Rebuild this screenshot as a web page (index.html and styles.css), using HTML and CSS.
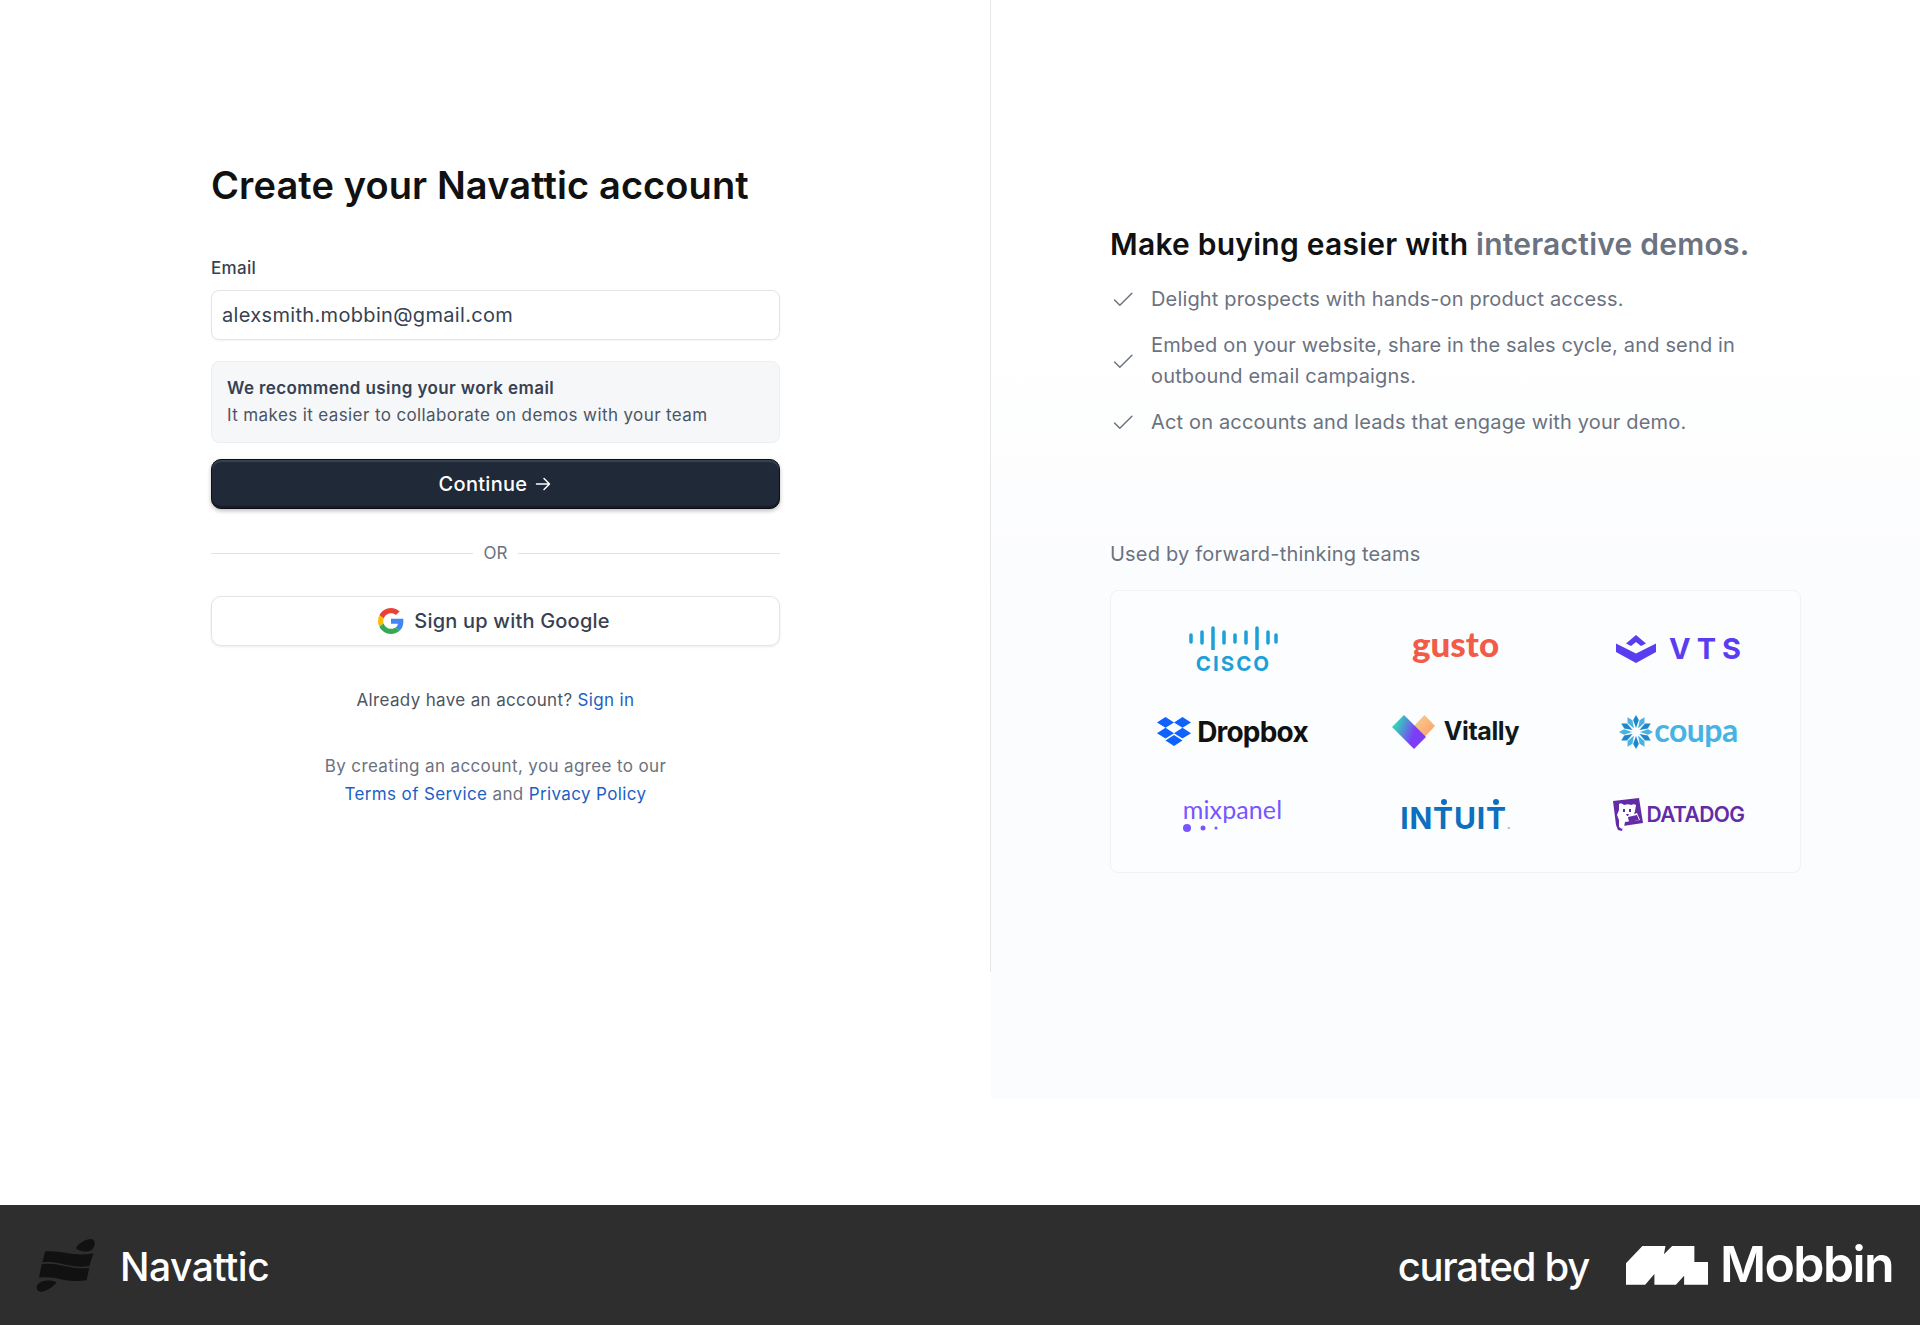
FILE: index.html
```html
<!DOCTYPE html>
<html lang="en">
<head>
<meta charset="utf-8">
<title>Create your Navattic account</title>
<link rel="stylesheet" href="styles.css">
</head>
<body>
<main class="split">
  <section class="left">
    <div class="form">
      <h1 class="title">Create your Navattic account</h1>
      <label class="label">Email</label>
      <div class="input">alexsmith.mobbin@gmail.com</div>
      <div class="notice">
        <strong class="notice-title">We recommend using your work email</strong>
        <span class="notice-text">It makes it easier to collaborate on demos with your team</span>
      </div>
      <button class="btn-primary">Continue
        <svg class="arrow" viewBox="0 0 18 18" width="18" height="18" fill="none" stroke="#fff" stroke-width="1.5" stroke-linecap="round" stroke-linejoin="round"><path d="M2.500 9h13M10 3.500 15.500 9 10 14.500"/></svg>
      </button>
      <div class="or"><span class="or-line"></span><span class="or-text">OR</span><span class="or-line"></span></div>
      <button class="btn-google">
        <svg viewBox="0 0 48 48" width="26" height="26"><path fill="#EA4335" d="M24 9.500c3.500 0 6.600 1.200 9.100 3.600l6.800-6.800C35.800 2.500 30.400 0 24 0 14.600 0 6.500 5.400 2.600 13.200l7.900 6.200C12.400 13.700 17.700 9.500 24 9.500z"/><path fill="#4285F4" d="M46.900 24.500c0-1.600-.1-3.100-.4-4.500H24v9h12.900c-.6 3-2.200 5.500-4.700 7.200l7.700 6c4.500-4.200 7-10.300 7-17.700z"/><path fill="#FBBC05" d="M10.500 28.600c-.5-1.400-.8-3-.8-4.600s.3-3.200.8-4.600l-7.900-6.200C.9 16.500 0 20.100 0 24s.9 7.500 2.600 10.800l7.900-6.200z"/><path fill="#34A853" d="M24 48c6.500 0 11.900-2.100 15.900-5.800l-7.700-6c-2.200 1.400-4.900 2.300-8.200 2.300-6.300 0-11.600-4.200-13.500-9.900l-7.900 6.200C6.500 42.600 14.600 48 24 48z"/></svg>
        <span>Sign up with Google</span>
      </button>
      <p class="signin">Already have an account? <a class="link" href="#">Sign in</a></p>
      <p class="terms">By creating an account, you agree to our<br><a class="link" href="#">Terms of Service</a> and <a class="link" href="#">Privacy Policy</a></p>
    </div>
  </section>
  <section class="right">
    <h2 class="pitch">Make buying easier with <span class="pitch-muted">interactive demos.</span></h2>
    <ul class="checks">
      <li class="check"><svg class="tick" viewBox="0 0 20 20" width="21" height="21" fill="none" stroke="#6b7280" stroke-width="1.4" stroke-linecap="round" stroke-linejoin="round"><path d="M1.500 10.500 6.500 15.500 18 4"/></svg><span>Delight prospects with hands-on product access.</span></li>
      <li class="check"><svg class="tick" viewBox="0 0 20 20" width="21" height="21" fill="none" stroke="#6b7280" stroke-width="1.4" stroke-linecap="round" stroke-linejoin="round"><path d="M1.500 10.500 6.500 15.500 18 4"/></svg><span>Embed on your website, share in the sales cycle, and send in outbound email campaigns.</span></li>
      <li class="check"><svg class="tick" viewBox="0 0 20 20" width="21" height="21" fill="none" stroke="#6b7280" stroke-width="1.4" stroke-linecap="round" stroke-linejoin="round"><path d="M1.500 10.500 6.500 15.500 18 4"/></svg><span>Act on accounts and leads that engage with your demo.</span></li>
    </ul>
    <p class="used">Used by forward-thinking teams</p>
    <div class="logos">
      <div class="logo logo-cisco">
        <svg viewBox="0 0 90 24" width="90" height="24" fill="none" stroke="#1ba0d7" stroke-width="3.500" stroke-linecap="round"><path d="M3 9v7M14 6v11M25 2v21M36 6v11M47 9v7M58 6v11M69 2v21M80 6v11M88 9v7"/></svg>
        <span class="cisco-text">CISCO</span>
      </div>
      <div class="logo"><span class="gusto">gusto</span></div>
      <div class="logo logo-vts">
        <svg viewBox="0 0 40 28" width="40" height="28" fill="#5a3df0"><path d="M0 8.500 20 18.500 40 8.500V17L20 28 0 17zM20 0 30 8.500 25 11 20 7 15 11 10 8.500z"/></svg>
        <span class="vts">VTS</span>
      </div>
      <div class="logo logo-dropbox">
        <svg viewBox="0 0 34 30" width="34" height="30" fill="#0f62fe"><path d="M8.500 0 17 5.400 8.500 10.800 0 5.400zM25.500 0 34 5.400l-8.500 5.400L17 5.400zM0 16.200l8.500-5.400 8.500 5.400-8.500 5.400zM25.500 10.800l8.500 5.400-8.500 5.400-8.500-5.400zM8.500 23.400 17 18l8.500 5.400L17 29z"/></svg>
        <span class="dropbox">Dropbox</span>
      </div>
      <div class="logo logo-vitally">
        <svg viewBox="0 0 44 34" width="44" height="34"><defs><linearGradient id="vg" x1="0" y1="0" x2="1" y2=".4"><stop offset=".2" stop-color="#33d1bb"/><stop offset=".75" stop-color="#7d3df5"/></linearGradient><linearGradient id="vo" x1="0" y1="0" x2="1" y2="1"><stop offset="0" stop-color="#f9cf9a"/><stop offset="1" stop-color="#fb9e5e"/></linearGradient></defs><path fill="url(#vo)" d="M22 11 32.500 0 43 11 32.500 22z"/><path fill="url(#vg)" d="M0 12 12 0 34 22 22 34z"/></svg>
        <span class="vitally">Vitally</span>
      </div>
      <div class="logo logo-coupa">
        <svg viewBox="0 0 34 34" width="34" height="34"><g fill="#1f86c9"><path d="M17 0l2.800 5-2.800 8-2.800-8z"/><path d="M17 0l2.800 5-2.800 8-2.800-8z" transform="rotate(60 17 17)"/><path d="M17 0l2.800 5-2.800 8-2.800-8z" transform="rotate(120 17 17)"/><path d="M17 0l2.800 5-2.800 8-2.800-8z" transform="rotate(180 17 17)"/><path d="M17 0l2.800 5-2.800 8-2.800-8z" transform="rotate(240 17 17)"/><path d="M17 0l2.800 5-2.800 8-2.800-8z" transform="rotate(300 17 17)"/></g><g fill="#47b3e4"><path d="M17 0l2.800 5-2.800 8-2.800-8z" transform="rotate(30 17 17)"/><path d="M17 0l2.800 5-2.800 8-2.800-8z" transform="rotate(90 17 17)"/><path d="M17 0l2.800 5-2.800 8-2.800-8z" transform="rotate(150 17 17)"/><path d="M17 0l2.800 5-2.800 8-2.800-8z" transform="rotate(210 17 17)"/><path d="M17 0l2.800 5-2.800 8-2.800-8z" transform="rotate(270 17 17)"/><path d="M17 0l2.800 5-2.800 8-2.800-8z" transform="rotate(330 17 17)"/></g></svg>
        <span class="coupa">coupa</span>
      </div>
      <div class="logo logo-mix">
        <span class="mixpanel">mixpanel</span>
        <svg class="mix-dots" viewBox="0 0 36 10" width="36" height="10" fill="#7856ff"><circle cx="4" cy="5" r="4"/><circle cx="20" cy="5" r="2.500"/><circle cx="33" cy="5" r="1.500"/></svg>
      </div>
      <div class="logo"><span class="intuit">IN<span class="dotted">T</span>UI<span class="dotted">T</span><span class="intuit-mark">.</span></span></div>
      <div class="logo logo-datadog">
        <svg viewBox="0 0 30 34" width="30" height="34"><path fill="#632ca6" d="M0 3 26 0l4 25-20 3-1 5-4-1-2-5z"/><path fill="#fff" d="M6 6c2-1 4 0 5 1 3-1 5-1 7 0 2-1 4-1 5 0l-1 6-1 3 3-1 3 7-15 2-1 5-2 2-3-2v-7l-2-5 2-5z"/><path fill="#632ca6" d="M10 11h2v3h-2zM16 11h2v3h-2zM13 16h3l-1 2h-1zM15 19l9-2 2 5-10 2z"/></svg>
        <span class="datadog">DATADOG</span>
      </div>
    </div>
  </section>
</main>
<footer class="footer">
  <div class="brand">
    <svg class="brand-mark" viewBox="0 0 240 210" width="80" height="70" fill="#111"><path d="M45 65C90 58 130 82 190 70L178 108C120 118 90 90 37 97zM35 103C90 95 120 122 178 113L170 150C110 162 80 135 27 143zM138 55C145 38 170 26 185 27 197 30 197 48 185 60 170 68 150 66 138 55zM22 165C32 150 60 148 80 156 70 172 45 186 30 185 20 183 18 172 22 165z"/></svg>
    <span class="brand-name">Navattic</span>
  </div>
  <div class="curated">
    <span class="curated-by">curated by</span>
    <svg class="mobbin-mark" viewBox="0 0 80 38" width="82" height="39" fill="#fff"><path d="M0 37.700V16.700L16 0H38.500L37 8 45 0H66.700V15.700H80V37.700H56.700V29L48.700 37.700H27.700V27.300L18.700 37.700z"/></svg>
    <span class="mobbin">Mobbin</span>
  </div>
</footer>
</body>
</html>
```

FILE: styles.css
```css
* { box-sizing: border-box; }
html, body { margin: 0; padding: 0; }
body { width: 1920px; height: 1325px; background: #fff; font-family: "Inter", "Liberation Sans", sans-serif; color: #374151; display: flex; flex-direction: column; overflow: hidden; }
.split { height: 1205px; display: flex; align-items: flex-start; }
.left { width: 991px; height: 972px; border-right: 1px solid #e5e7eb; padding: 162px 0 0 211px; }
.form { width: 569px; }
.title { margin: 0; font-size: 38px; line-height: 46px; font-weight: 600; color: #111; letter-spacing: .1px; }
.label { display: block; margin-top: 49px; font-size: 17px; line-height: 22px; font-weight: 500; color: #374151; letter-spacing: .3px; }
.input { margin-top: 11px; height: 50px; border: 1px solid #e2e4e8; border-radius: 8px; padding: 0 10px; font-size: 20px; line-height: 48px; letter-spacing: .33px; color: #374151; box-shadow: 0 1px 2px rgba(0,0,0,.05); }
.notice { margin-top: 21px; height: 82px; border: 1px solid #eceef1; border-radius: 8px; background: #f6f7f9; padding: 14px 15px; display: flex; flex-direction: column; gap: 3px; font-size: 17px; line-height: 24px; letter-spacing: .39px; }
.notice-title { font-weight: 600; color: #374151; }
.notice-text { color: #4b5563; }
.btn-primary { margin-top: 16px; width: 100%; height: 50px; border: 1px solid #0b0f17; border-radius: 10px; background: #1f2937; color: #fff; font: 500 20px "Inter", sans-serif; letter-spacing: .3px; display: flex; align-items: center; justify-content: center; gap: 7px; box-shadow: 0 2px 4px rgba(0,0,0,.25), inset 0 2px 1px rgba(255,255,255,.12), inset 0 -2px 1px rgba(0,0,0,.3); }
.or { margin-top: 32px; display: flex; align-items: center; gap: 11px; height: 24px; }
.or-line { flex: 1; height: 1px; background: #e0e2e6; }
.or-text { font-size: 17px; color: #6b7280; }
.btn-google { margin-top: 31px; width: 100%; height: 50px; padding: 0 3px 0 0; border: 1px solid #e2e4e8; border-radius: 10px; background: #fff; color: #374151; font: 500 20px "Inter", sans-serif; letter-spacing: .2px; display: flex; align-items: center; justify-content: center; gap: 10px; box-shadow: 0 1px 3px rgba(0,0,0,.08); }
.signin { margin: 42px 0 0; text-align: center; font-size: 17px; line-height: 24px; color: #4b5563; letter-spacing: .35px; }
.terms { margin: 40px 0 0; text-align: center; font-size: 17px; line-height: 28px; color: #6b7280; letter-spacing: .37px; }
.link { color: #1d5fc4; text-decoration: none; }
.right { flex: 1; height: 1098px; background: linear-gradient(#fff 30%, #fbfcfe 55%); padding: 225px 119px 0 119px; }
.pitch { margin: 0; font-size: 30px; line-height: 38px; font-weight: 600; color: #111; letter-spacing: .24px; }
.pitch-muted { color: #6b7280; }
.checks { list-style: none; margin: 21px 0 0; padding: 0; display: flex; flex-direction: column; gap: 15px; }
.check { display: flex; align-items: center; gap: 17px; font-size: 20px; line-height: 31px; letter-spacing: .16px; color: #6b7280; }
.tick { flex: none; margin-left: 3px; }
.used { margin: 102px 0 0; font-size: 20px; line-height: 28px; letter-spacing: .2px; color: #6b7280; }
.logos { margin-top: 22px; height: 283px; border: 1px solid #f0f2f4; border-radius: 8px; background: #fcfdfe; padding: 16px 10px; display: grid; grid-template-columns: repeat(3, 1fr); grid-auto-rows: 83px; }
.logo { display: flex; align-items: center; justify-content: center; }
.logo-cisco, .logo-mix { flex-direction: column; }
.cisco-text { margin-top: 6px; margin-right: -2px; font: 700 20.500px/16px "Inter", sans-serif; letter-spacing: 2px; color: #1ba0d7; }
.gusto { font: 900 35px/1 "Lato", sans-serif; color: #f15b47; margin-top: -10px; }
.logo-vts { gap: 13px; }
.vts { margin-right: -6px; font: 700 29px/1 "Inter", sans-serif; letter-spacing: 6px; color: #5a3df0; }
.logo-dropbox { gap: 6px; }
.dropbox { font: 700 28px/1 "Inter", sans-serif; letter-spacing: -.8px; color: #111; }
.logo-vitally { gap: 8px; }
.vitally { font: 700 25px/1 "Inter", sans-serif; letter-spacing: -.4px; color: #10191c; }
.logo-coupa { gap: 1px; }
.coupa { margin-top: -4px; font: 700 32px/1 "Lato", sans-serif; color: #47b3e4; letter-spacing: -.5px; }
.mixpanel { font: 400 25px/26px "Lato", sans-serif; color: #7856ff; letter-spacing: .1px; }
.mix-dots { align-self: center; margin-left: -64px; margin-top: 1px; }
.intuit { font: 700 30px/1 "Inter", sans-serif; letter-spacing: .8px; color: #0d6fbd; margin-top: 6px; }
.dotted { position: relative; display: inline-block; }
.dotted::before { content: ""; position: absolute; left: 50%; top: -4px; width: 6px; height: 6px; margin-left: -3px; border-radius: 50%; background: #0d6fbd; }
.intuit-mark { font-size: 12px; color: #9db7d8; letter-spacing: 0; }
.logo-datadog { gap: 4px; }
.datadog { font: 600 21px/1 "Inter", sans-serif; letter-spacing: -.6px; color: #632ca6; }
.footer { height: 120px; background: #2e2e2e; display: flex; align-items: center; justify-content: space-between; padding: 0 27px 0 30px; color: #fff; }
.brand, .curated { display: flex; align-items: center; }
.brand-name { margin-left: 10px; margin-top: 2px; font-size: 39px; font-weight: 500; letter-spacing: -.5px; }
.curated-by { margin-top: 2px; font-size: 40px; font-weight: 500; letter-spacing: -1.300px; }
.mobbin-mark { margin-left: 37px; }
.mobbin { margin-left: 12px; margin-top: -2px; font-size: 50px; font-weight: 600; letter-spacing: -1.600px; }
```
